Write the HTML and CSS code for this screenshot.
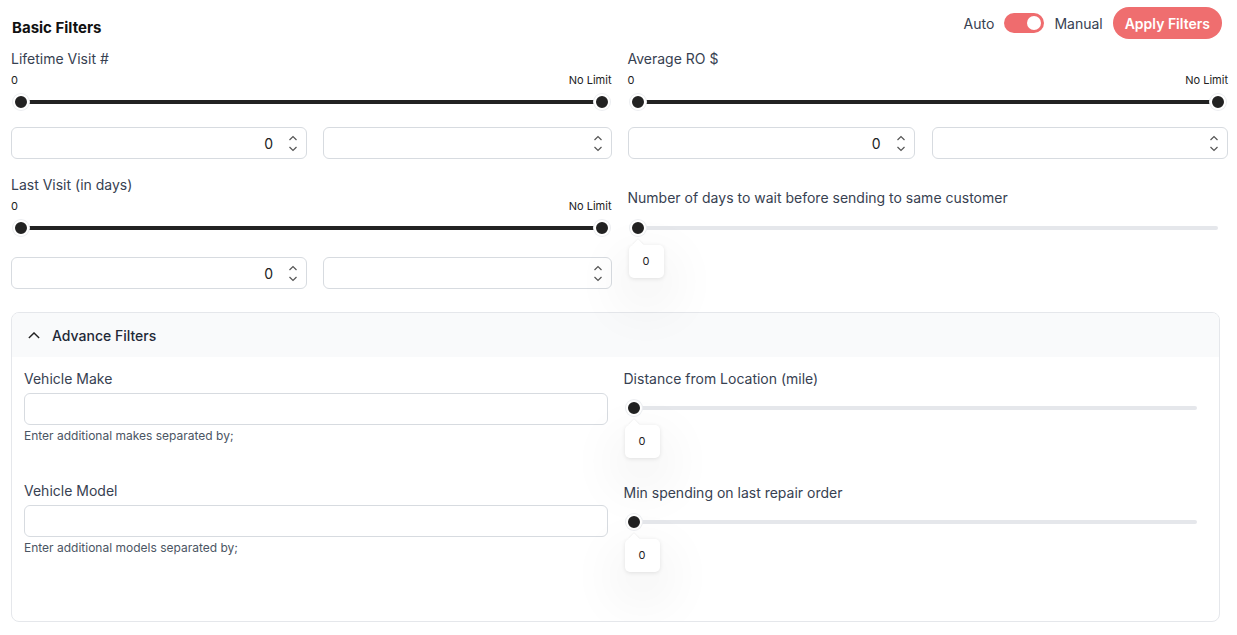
FILE: index.html
```html
<!DOCTYPE html>
<html lang="en">
<head>
  <meta charset="UTF-8">
  <meta name="viewport" content="width=device-width, initial-scale=1.0">
  <title>Filters</title>
  <link rel="stylesheet" href="styles.css">
</head>
<body>
  <div class="header">
    <h2 class="title">Basic Filters</h2>
    <div class="mode">
      <span class="mode-label">Auto</span>
      <span class="toggle"><span class="knob"></span></span>
      <span class="mode-label">Manual</span>
      <button class="apply-btn">Apply Filters</button>
    </div>
  </div>

  <div class="basic-grid">
    <div class="col">
      <div class="field">
        <div class="label">Lifetime Visit #</div>
        <div class="minmax"><span>0</span><span>No Limit</span></div>
        <div class="slider range">
          <div class="track"></div>
          <span class="thumb thumb-start"></span>
          <span class="thumb thumb-end"></span>
        </div>
        <div class="inputs inputs-left">
          <div class="num-input"><span class="num-value">0</span><span class="spin"><svg viewBox="0 0 10 6"><path d="M1.5 5L5 1.5L8.5 5"/></svg><svg viewBox="0 0 10 6"><path d="M1.5 1L5 4.5L8.5 1"/></svg></span></div>
          <div class="num-input"><span class="num-value"></span><span class="spin"><svg viewBox="0 0 10 6"><path d="M1.5 5L5 1.5L8.5 5"/></svg><svg viewBox="0 0 10 6"><path d="M1.5 1L5 4.5L8.5 1"/></svg></span></div>
        </div>
      </div>
      <div class="field">
        <div class="label">Last Visit (in days)</div>
        <div class="minmax"><span>0</span><span>No Limit</span></div>
        <div class="slider range">
          <div class="track"></div>
          <span class="thumb thumb-start"></span>
          <span class="thumb thumb-end"></span>
        </div>
        <div class="inputs inputs-left inputs-low">
          <div class="num-input"><span class="num-value">0</span><span class="spin"><svg viewBox="0 0 10 6"><path d="M1.5 5L5 1.5L8.5 5"/></svg><svg viewBox="0 0 10 6"><path d="M1.5 1L5 4.5L8.5 1"/></svg></span></div>
          <div class="num-input"><span class="num-value"></span><span class="spin"><svg viewBox="0 0 10 6"><path d="M1.5 5L5 1.5L8.5 5"/></svg><svg viewBox="0 0 10 6"><path d="M1.5 1L5 4.5L8.5 1"/></svg></span></div>
        </div>
      </div>
    </div>

    <div class="col">
      <div class="field">
        <div class="label">Average RO $</div>
        <div class="minmax"><span>0</span><span>No Limit</span></div>
        <div class="slider range">
          <div class="track"></div>
          <span class="thumb thumb-start"></span>
          <span class="thumb thumb-end"></span>
        </div>
        <div class="inputs inputs-right">
          <div class="num-input"><span class="num-value">0</span><span class="spin"><svg viewBox="0 0 10 6"><path d="M1.5 5L5 1.5L8.5 5"/></svg><svg viewBox="0 0 10 6"><path d="M1.5 1L5 4.5L8.5 1"/></svg></span></div>
          <div class="num-input"><span class="num-value"></span><span class="spin"><svg viewBox="0 0 10 6"><path d="M1.5 5L5 1.5L8.5 5"/></svg><svg viewBox="0 0 10 6"><path d="M1.5 1L5 4.5L8.5 1"/></svg></span></div>
        </div>
      </div>
      <div class="field single">
        <div class="label">Number of days to wait before sending to same customer</div>
        <div class="slider">
          <div class="track"></div>
          <span class="thumb thumb-start"></span>
        </div>
        <div class="tip">0</div>
      </div>
    </div>
  </div>

  <div class="panel">
    <div class="panel-head">
      <svg class="chevron" viewBox="0 0 14 8"><path d="M1 7L7 1L13 7"/></svg>
      <span>Advance Filters</span>
    </div>
    <div class="panel-body">
      <div class="col">
        <div class="text-field">
          <div class="label">Vehicle Make</div>
          <input class="text-input" type="text">
          <div class="help">Enter additional makes separated by;</div>
        </div>
        <div class="text-field">
          <div class="label">Vehicle Model</div>
          <input class="text-input" type="text">
          <div class="help">Enter additional models separated by;</div>
        </div>
      </div>
      <div class="col">
        <div class="field single inner">
          <div class="label">Distance from Location (mile)</div>
          <div class="slider">
            <div class="track"></div>
            <span class="thumb thumb-start"></span>
          </div>
          <div class="tip">0</div>
        </div>
        <div class="field single inner">
          <div class="label">Min spending on last repair order</div>
          <div class="slider">
            <div class="track"></div>
            <span class="thumb thumb-start"></span>
          </div>
          <div class="tip">0</div>
        </div>
      </div>
    </div>
  </div>
</body>
</html>
```

FILE: styles.css
```css
* {
  box-sizing: border-box;
}

body {
  margin: 0;
  padding: 7px 9px 0 11px;
  background: #fff;
  font-family: Inter, "Noto Sans", sans-serif;
  color: #1f2937;
}

.header {
  display: flex;
  justify-content: space-between;
  align-items: flex-end;
  height: 32px;
}

.title {
  margin: 0 0 1px 1px;
  font-size: 15px;
  line-height: 20px;
  font-weight: 700;
  color: #111;
}

.mode {
  display: flex;
  align-items: center;
  gap: 10px;
  margin-right: 6px;
}

.mode-label {
  font-size: 14px;
  color: #374151;
}

.toggle {
  position: relative;
  width: 40px;
  height: 20px;
  border-radius: 10px;
  background: #ef6c6e;
}

.knob {
  position: absolute;
  top: 3px;
  right: 3px;
  width: 14px;
  height: 14px;
  border-radius: 50%;
  background: #fff;
}

.apply-btn {
  height: 32px;
  padding: 0 12px;
  border: none;
  border-radius: 16px;
  background: #ef6e6f;
  color: #fff;
  font-family: inherit;
  font-size: 14px;
  font-weight: 600;
}

.basic-grid {
  display: grid;
  grid-template-columns: 1fr 1fr;
  column-gap: 16px;
  margin-top: 10px;
}

.field {
  margin-bottom: 16px;
}

.label {
  font-size: 14px;
  line-height: 20px;
  color: #374151;
}

.minmax {
  display: flex;
  justify-content: space-between;
  margin-top: 4px;
  font-size: 11px;
  line-height: 14px;
  color: #222;
}

.slider {
  position: relative;
  height: 20px;
  margin: 5px 10px 0;
}

.track {
  position: absolute;
  top: 8px;
  left: 0;
  right: 0;
  height: 4px;
  border-radius: 2px;
  background: #e5e7eb;
}

.range .track {
  background: #222;
}

.thumb {
  position: absolute;
  top: 2px;
  width: 16px;
  height: 16px;
  margin-left: -8px;
  border-radius: 50%;
  background: #222;
  border: 2px solid #fff;
  box-shadow: 0 0 0 1px #eceef1;
}

.thumb-start {
  left: 0;
}

.thumb-end {
  left: 100%;
}

.inputs {
  display: grid;
  gap: 16px;
  margin-top: 15px;
}

.inputs-left {
  grid-template-columns: 296px 1fr;
}

.inputs-right {
  grid-template-columns: 287px 1fr;
  column-gap: 17px;
}

.inputs-low {
  margin-top: 19px;
}

.num-input {
  display: flex;
  align-items: center;
  justify-content: flex-end;
  height: 32px;
  border: 1px solid #d7dbe0;
  border-radius: 6px;
  padding-right: 8px;
}

.num-value {
  font-size: 14px;
  color: #222;
  margin-right: 15px;
}

.spin {
  display: flex;
  flex-direction: column;
  gap: 5px;
}

.spin svg {
  width: 10px;
  height: 6px;
  fill: none;
  stroke: #555;
  stroke-width: 1.2;
}

.single {
  padding-top: 13px;
}

.single .label {
  margin-bottom: 10px;
}

.single .slider {
  margin-top: 0;
}

.tip {
  position: relative;
  width: 35px;
  height: 33px;
  margin: 7px 0 0 1px;
  border-radius: 5px;
  background: #fff;
  font-size: 11px;
  line-height: 33px;
  text-align: center;
  color: #222;
  box-shadow: 0 1px 4px rgba(0, 0, 0, 0.1), 0 20px 50px 14px rgba(0, 0, 0, 0.045);
}

.tip::before {
  content: "";
  position: absolute;
  top: -4px;
  left: 5px;
  width: 8px;
  height: 8px;
  background: #fff;
  transform: rotate(45deg);
  box-shadow: -1px -1px 1px rgba(0, 0, 0, 0.04);
}

.panel {
  margin: 7px 8px 0 0;
  border: 1px solid #e5e7eb;
  border-radius: 8px;
  overflow: hidden;
}

.panel-head {
  display: flex;
  align-items: center;
  gap: 12px;
  height: 44px;
  padding-left: 16px;
  background: #f9fafb;
  font-size: 14px;
  font-weight: 500;
  color: #1f2937;
}

.chevron {
  width: 12px;
  height: 7px;
  fill: none;
  stroke: #222;
  stroke-width: 1.6;
}

.panel-body {
  display: grid;
  grid-template-columns: 1fr 1fr;
  column-gap: 16px;
  padding: 12px 12px 49px;
}

.text-field {
  margin-bottom: 37px;
}

.text-field:last-child {
  margin-bottom: 0;
}

.text-input {
  display: block;
  width: 100%;
  height: 32px;
  margin-top: 4px;
  border: 1px solid #d7dbe0;
  border-radius: 6px;
  font-family: inherit;
}

.help {
  margin-top: 3px;
  font-size: 12px;
  line-height: 16px;
  color: #4b5563;
}

.inner {
  padding-top: 0;
  margin-bottom: 25px;
}

.inner:last-child {
  margin-bottom: 0;
}

.inner .label {
  margin-bottom: 9px;
}
```
